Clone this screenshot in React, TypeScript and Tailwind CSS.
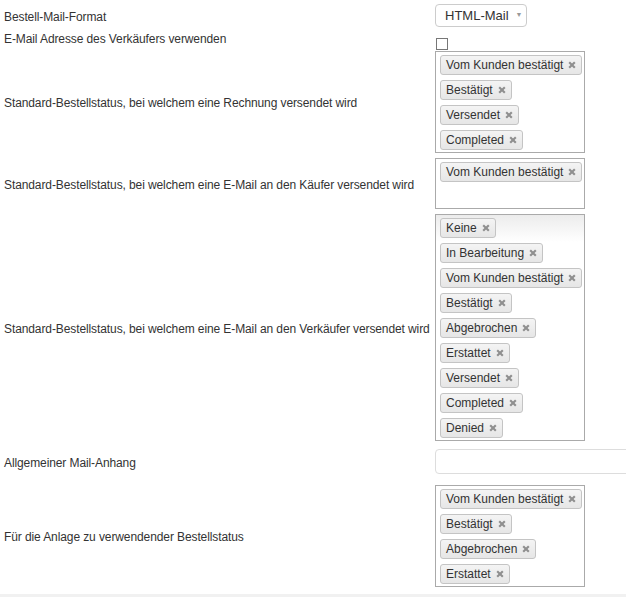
import React from "react";

const font = { fontFamily: '"Liberation Sans", Arial, sans-serif' };

function Tag({ label }: { label: string }) {
  return (
    <div className="flex h-[20px] w-max items-center rounded-[3px] border border-[#c4c4c4] bg-gradient-to-b from-[#f4f4f4] to-[#e6e6e6] pl-[5px] pr-[5px] text-[12px] leading-[14px] text-[#333]">
      <span>{label}</span>
      <svg className="ml-[5px]" width="8" height="8" viewBox="0 0 8 8">
        <path d="M1.2 1.2 L6.8 6.8 M6.8 1.2 L1.2 6.8" stroke="#8f8f8f" strokeWidth="2.1" />
      </svg>
    </div>
  );
}

function Multi({ tags, minH = "", shaded = false }: { tags: string[]; minH?: string; shaded?: boolean }) {
  return (
    <div
      className={
        "flex w-[150px] shrink-0 flex-col gap-[5px] border border-[#aaa] pt-[3px] pb-[2px] pl-[4px] " +
        minH +
        (shaded ? " bg-gradient-to-b from-[#ececec] via-white via-[12%] to-white" : " bg-white")
      }
    >
      {tags.map((t) => (
        <Tag key={t} label={t} />
      ))}
    </div>
  );
}

function Row({ label, children, className = "" }: { label: string; children: React.ReactNode; className?: string }) {
  return (
    <div className={"flex items-center " + className}>
      <div className="w-[435px] shrink-0 whitespace-nowrap pl-[4px] pt-[2px] text-[12px] leading-[16px] tracking-[-0.1px] text-[#333]">
        {label}
      </div>
      {children}
    </div>
  );
}

export default function App() {
  return (
    <div className="h-[600px] w-[626px] overflow-hidden bg-white pt-[4px]" style={font}>
      {/* Mail format */}
      <Row label="Bestell-Mail-Format">
        <div className="flex h-[23px] w-[92px] items-center rounded-[4px] border border-[#ccc] bg-white pl-[9px] text-[13px] text-[#333]">
          <span>HTML-Mail</span>
          <span className="ml-[7px] text-[7px] text-[#999]">▼</span>
        </div>
      </Row>

      {/* Seller address */}
      <div className="flex h-[24px]">
        <div className="w-[435px] shrink-0 self-center whitespace-nowrap pl-[4px] text-[12px] leading-[16px] tracking-[-0.1px] text-[#333]">
          E-Mail Adresse des Verkäufers verwenden
        </div>
        <div className="mb-[1px] ml-[1px] h-[12px] w-[12px] self-end border border-[#777] bg-white" />
      </div>

      <Row label="Standard-Bestellstatus, bei welchem eine Rechnung versendet wird">
        <Multi tags={["Vom Kunden bestätigt", "Bestätigt", "Versendet", "Completed"]} />
      </Row>

      <Row label="Standard-Bestellstatus, bei welchem eine E-Mail an den Käufer versendet wird" className="mt-[5px]">
        <Multi tags={["Vom Kunden bestätigt"]} minH="min-h-[51px]" />
      </Row>

      <Row label="Standard-Bestellstatus, bei welchem eine E-Mail an den Verkäufer versendet wird" className="mt-[5px]">
        <Multi
          shaded
          tags={[
            "Keine",
            "In Bearbeitung",
            "Vom Kunden bestätigt",
            "Bestätigt",
            "Abgebrochen",
            "Erstattet",
            "Versendet",
            "Completed",
            "Denied",
          ]}
        />
      </Row>

      <Row label="Allgemeiner Mail-Anhang" className="mt-[8px]">
        <div className="h-[25px] w-[230px] shrink-0 rounded-[4px] border border-[#ddd] bg-white" />
      </Row>

      <Row label="Für die Anlage zu verwendender Bestellstatus" className="mt-[11px]">
        <Multi tags={["Vom Kunden bestätigt", "Bestätigt", "Abgebrochen", "Erstattet"]} />
      </Row>

      <div className="mt-[7px] h-[3px] w-full bg-[#f1f1f1]" />
    </div>
  );
}
